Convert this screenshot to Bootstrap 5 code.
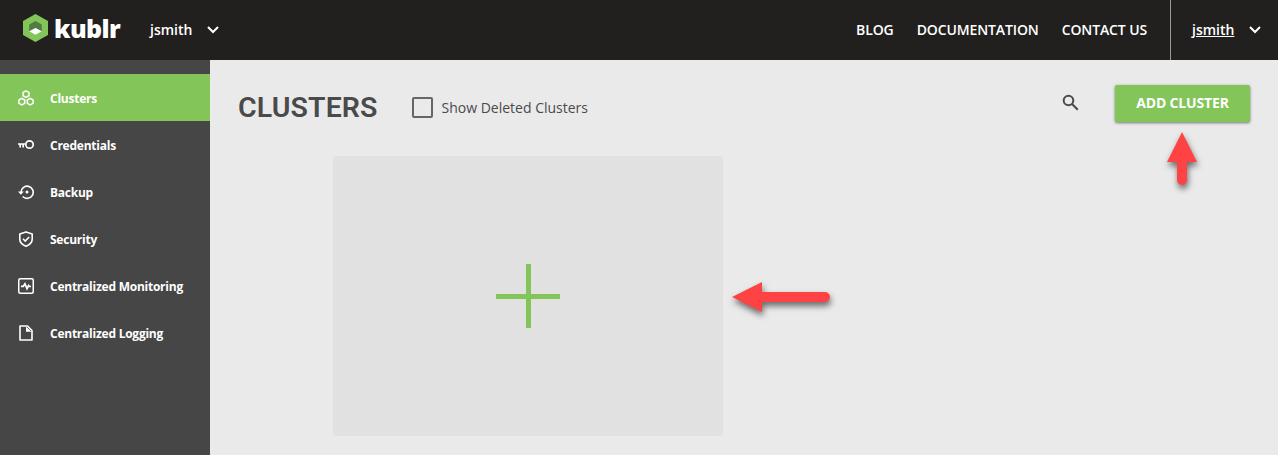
<!DOCTYPE html>
<html lang="en">
<head>
<meta charset="utf-8">
<meta name="viewport" content="width=device-width, initial-scale=1">
<title>Kublr - Clusters</title>
<link href="https://cdn.jsdelivr.net/npm/bootstrap@5.3.0/dist/css/bootstrap.min.css" rel="stylesheet">
<style>
body{font-family:"Open Sans","Noto Sans",sans-serif;background:#eaeaea;color:#4a4a4a;height:100vh;overflow:hidden}
svg{display:block;flex:none}
.topbar{height:60px;background:#22201f;color:#fff;font-size:14px;font-weight:600}
.brand{margin-left:23px;width:127px;gap:6px;margin-top:-4px}
.brand-name{font-size:25px;font-weight:800;line-height:28px;letter-spacing:-.6px}
.topbar a{color:#fff;text-decoration:none;white-space:nowrap;margin-top:-1px}
.user-menu{gap:15px}
.toplinks{gap:23px;margin-right:23px;letter-spacing:-.12px}
.account{width:108px;border-left:1px solid #999;padding-left:21px;gap:15px}
.topbar .account a{text-decoration:underline}
.sidebar{width:210px;background:#464646;padding-top:14px;flex:none}
.sidebar .nav-link{height:47px;padding:2px 0 0 18px;gap:16px;color:#fff;font-size:12px;font-weight:700;letter-spacing:-.24px;border-radius:0;white-space:nowrap}
.sidebar .nav-link svg{margin-top:-2px}
.sidebar .nav-link.active{background:#83c558}
.page{padding:25px 28px 0}
.toolbar{height:37px}
.page-title{font:600 28.5px/37px Roboto,sans-serif;letter-spacing:.1px;width:174px;padding-top:7px}
.show-deleted{gap:8.5px;font-size:14px;padding-top:8px}
.show-deleted .form-check-input{width:21px;height:21px;border:2px solid #666;border-radius:2px;background:transparent;margin:0}
.search{margin:-2px 36px 0 0}
.btn-add{width:135px;height:37px;background:#83c558;color:#fff;font-size:14px;font-weight:700;letter-spacing:-.15px;border:0;border-radius:2px;padding:0 0 2px;box-shadow:0 1px 3px rgba(0,0,0,.5)}
.new-cluster{width:390px;height:280px;margin:34px 0 0 95px;background:#e1e1e1;border:0;border-radius:4px}
.pointer{position:absolute;overflow:visible;filter:drop-shadow(1px 4px 3px rgba(0,0,0,.55))}
.pointer-add{left:50%;top:47px;margin-left:-15.5px}
.pointer-card{left:494px;top:126px}
</style>
</head>
<body class="d-flex flex-column">
<header class="topbar d-flex align-items-center">
  <div class="brand d-flex align-items-center">
    <svg width="25" height="28" viewBox="0 0 25 28"><path fill="#83c558" d="M12.5 0 25 7v14l-12.5 7L0 21V7z"/><path fill="#517d43" d="m12.500 7 6.300 3.600v6.800l-6.300-3-6.300 3v-6.800z"/><path fill="#fff" d="m12.500 14 6.300 3.300-6.300 3.400-6.300-3.400z"/></svg>
    <span class="brand-name">kublr</span>
  </div>
  <a href="#" class="user-menu d-flex align-items-center">jsmith
    <svg width="12" height="8" viewBox="0 0 12 8" fill="none" stroke="#fff" stroke-width="2"><path d="m1 1 5 5 5-5"/></svg></a>
  <nav class="toplinks d-flex ms-auto"><a href="#">BLOG</a><a href="#">DOCUMENTATION</a><a href="#">CONTACT US</a></nav>
  <div class="account d-flex align-items-center h-100"><a href="#">jsmith</a>
    <svg width="12" height="8" viewBox="0 0 12 8" fill="none" stroke="#fff" stroke-width="2"><path d="m1 1 5 5 5-5"/></svg></div>
</header>
<div class="d-flex flex-grow-1">
  <aside class="sidebar">
    <nav class="nav flex-column">
      <a href="#" class="nav-link active d-flex align-items-center"><svg width="16" height="16" viewBox="0 0 16 16" fill="none" stroke="#fff" stroke-width="1.5"><path d="m8 .8 2.900 1.600v3.300L8 7.300 5.100 5.700V2.400zM3.800 8.400l2.900 1.600v3.300l-2.900 1.600-2.900-1.600V10zM12.200 8.400l2.900 1.600v3.300l-2.900 1.600-2.900-1.600V10z"/></svg>Clusters</a>
      <a href="#" class="nav-link d-flex align-items-center"><svg width="16" height="16" viewBox="0 0 16 16" fill="none" stroke="#fff" stroke-width="1.700"><circle cx="11.500" cy="7.500" r="3.700"/><path d="M0 7h7.500M2.200 7v3.500M5.200 7v3.500"/></svg>Credentials</a>
      <a href="#" class="nav-link d-flex align-items-center"><svg width="16" height="16" viewBox="0 0 16 16" fill="none" stroke="#fff" stroke-width="1.600"><path d="M3 8.500a6.100 6.100 0 1 1 1.700 4"/><path fill="#fff" stroke="none" d="M0 7.500h5.800L2.900 10.800z"/><circle cx="9" cy="8" r="1.500" fill="#fff" stroke="none"/></svg>Backup</a>
      <a href="#" class="nav-link d-flex align-items-center"><svg width="16" height="16" viewBox="0 0 16 16" fill="none" stroke="#fff" stroke-width="1.600"><path stroke-linejoin="round" d="m8 .9 6.200 2.200v5.200c0 3.300-2.600 5.500-6.200 6.900-3.600-1.400-6.200-3.600-6.200-6.900V3.100z"/><path d="m5 7.800 2.200 2.200 4-4"/></svg>Security</a>
      <a href="#" class="nav-link d-flex align-items-center"><svg width="16" height="16" viewBox="0 0 16 16" fill="none" stroke="#fff" stroke-width="1.500"><rect x=".75" y=".75" width="14.500" height="14.500" rx="1.500"/><path stroke-width="1.700" d="M3 8.300h2.300L7 5.800l2 4.900 1.600-3.200 1 1H13"/></svg>Centralized Monitoring</a>
      <a href="#" class="nav-link d-flex align-items-center"><svg width="16" height="16" viewBox="0 0 16 16" fill="none" stroke="#fff" stroke-width="1.600"><path stroke-linejoin="round" d="M2 1h7.500L14 5.500V15H2z"/><path fill="#fff" stroke="none" d="M8 1.500v5.300h5.500z"/></svg>Centralized Logging</a>
    </nav>
  </aside>
  <main class="page flex-grow-1">
    <div class="toolbar d-flex align-items-center">
      <h1 class="page-title mb-0">CLUSTERS</h1>
      <label class="show-deleted d-flex align-items-center"><input class="form-check-input" type="checkbox">Show Deleted Clusters</label>
      <svg class="search ms-auto" width="17" height="17" viewBox="0 0 17 17" fill="none" stroke="#4a4a4a" stroke-width="2"><circle cx="6.500" cy="6.500" r="4.800"/><path d="m10 10 5.800 5.800"/></svg>
      <div class="position-relative">
        <button class="btn btn-add d-block">ADD CLUSTER</button>
        <svg class="pointer pointer-add" width="30" height="54" viewBox="0 0 30 54"><path fill="#ff4344" d="M15 0 30 30H20V48a5 5 0 0 1-10 0V30H0z"/></svg>
      </div>
    </div>
    <div class="position-relative">
      <button class="new-cluster d-flex align-items-center justify-content-center" aria-label="Add cluster"><svg width="64" height="64" viewBox="0 0 64 64" stroke="#83c558" stroke-width="5"><path d="M32.500 0v64M0 32.500h64"/></svg></button>
      <svg class="pointer pointer-card" width="98" height="30" viewBox="0 0 98 30"><path fill="#ff4344" d="m0 15 30-15v10h63a5 5 0 0 1 0 10H30v10z"/></svg>
    </div>
  </main>
</div>
<script src="https://cdn.jsdelivr.net/npm/bootstrap@5.3.0/dist/js/bootstrap.bundle.min.js"></script>
</body>
</html>
